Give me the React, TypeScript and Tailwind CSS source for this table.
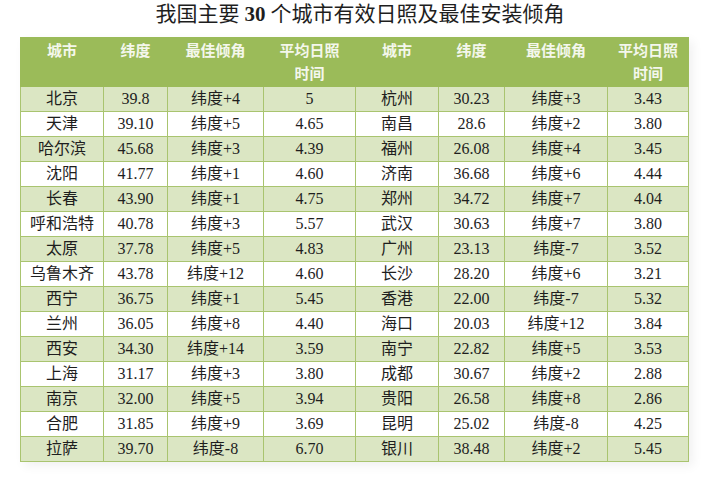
const rows: string[][] = [
  ["北京", "39.8", "纬度+4", "5", "杭州", "30.23", "纬度+3", "3.43"],
  ["天津", "39.10", "纬度+5", "4.65", "南昌", "28.6", "纬度+2", "3.80"],
  ["哈尔滨", "45.68", "纬度+3", "4.39", "福州", "26.08", "纬度+4", "3.45"],
  ["沈阳", "41.77", "纬度+1", "4.60", "济南", "36.68", "纬度+6", "4.44"],
  ["长春", "43.90", "纬度+1", "4.75", "郑州", "34.72", "纬度+7", "4.04"],
  ["呼和浩特", "40.78", "纬度+3", "5.57", "武汉", "30.63", "纬度+7", "3.80"],
  ["太原", "37.78", "纬度+5", "4.83", "广州", "23.13", "纬度-7", "3.52"],
  ["乌鲁木齐", "43.78", "纬度+12", "4.60", "长沙", "28.20", "纬度+6", "3.21"],
  ["西宁", "36.75", "纬度+1", "5.45", "香港", "22.00", "纬度-7", "5.32"],
  ["兰州", "36.05", "纬度+8", "4.40", "海口", "20.03", "纬度+12", "3.84"],
  ["西安", "34.30", "纬度+14", "3.59", "南宁", "22.82", "纬度+5", "3.53"],
  ["上海", "31.17", "纬度+3", "3.80", "成都", "30.67", "纬度+2", "2.88"],
  ["南京", "32.00", "纬度+5", "3.94", "贵阳", "26.58", "纬度+8", "2.86"],
  ["合肥", "31.85", "纬度+9", "3.69", "昆明", "25.02", "纬度-8", "4.25"],
  ["拉萨", "39.70", "纬度-8", "6.70", "银川", "38.48", "纬度+2", "5.45"],
];

const headers = ["城市", "纬度", "最佳倾角", "平均日照时间", "城市", "纬度", "最佳倾角", "平均日照时间"];
const widths = ["w-[83px]", "w-[64px]", "w-[96px]", "w-[92px]", "w-[83px]", "w-[66px]", "w-[103px]", "w-[81px]"];

export default function App() {
  return (
    <div className="w-[716px] h-[486px] bg-white text-[#1e1e1e] font-['Liberation_Serif','Noto_Sans_CJK_SC',serif]">
      <div className="h-[37px] flex items-center justify-center text-[21px] pb-[7px] pl-[4px]">
        <span>我国主要 </span>
        <span className="font-bold mx-[5px]">30</span>
        <span> 个城市有效日照及最佳安装倾角</span>
      </div>
      <div className="pl-[20px]">
        <table className="table-fixed border-collapse w-[668px] text-[16px] shadow-[4px_4px_10px_rgba(0,0,0,0.06)]">
          <thead>
            <tr className="h-[48px] bg-[#9bbb59]">
              {headers.map((h, i) => (
                <th
                  key={i}
                  className={`${widths[i]} align-top pt-[2px] px-[6px] text-[15px] leading-[23px] font-bold text-[#f4f7ec] border border-[#9bbb59]`}
                >
                  {h.length > 4 ? (
                    <>
                      {h.slice(0, 4)}
                      <br />
                      {h.slice(4)}
                    </>
                  ) : (
                    h
                  )}
                </th>
              ))}
            </tr>
          </thead>
          <tbody>
            {rows.map((r, ri) => (
              <tr key={ri} className={`h-[25px] ${ri % 2 === 0 ? "bg-[#dbe6c3]" : "bg-white"}`}>
                {r.map((c, ci) => (
                  <td key={ci} className="text-center leading-[22px] p-0 border border-[#a9c46f]">
                    {c}
                  </td>
                ))}
              </tr>
            ))}
          </tbody>
        </table>
      </div>
    </div>
  );
}
